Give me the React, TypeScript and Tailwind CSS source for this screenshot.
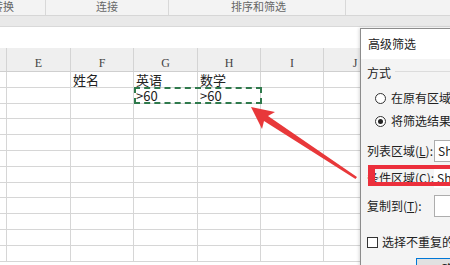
import React from 'react';

const CJK = "font-['Noto_Sans_CJK_SC','Noto_Sans',sans-serif]";
const SERIF = "font-['Liberation_Serif',serif]";

const columns = ['', 'E', 'F', 'G', 'H', 'I', 'J', 'K'];

// cell contents by row index -> column letter
const cells: Record<number, Record<string, string>> = {
  0: { F: '姓名', G: '英语', H: '数学' },
  1: { G: '>60', H: '>60' },
};

const gridCols = 'grid grid-cols-[7px_64px_63px_64px_63px_63px_63px_63px]';

const Ribbon: React.FC = () => (
  <div className={`flex h-[15px] bg-[#f3f3f3] text-[11px] leading-[13px] text-[#666] ${CJK}`}>
    <div className="w-[55px] border-r border-[#d8d8d8] pl-[1px] overflow-hidden whitespace-nowrap -ml-[9px]">
      <span>转换</span>
    </div>
    <div className="w-[123px] border-r border-[#d8d8d8] text-center">连接</div>
    <div className="w-[177px] border-r border-[#d8d8d8] pl-[62px]">排序和筛选</div>
    <div className="flex-1" />
  </div>
);

const SheetGrid: React.FC = () => (
  <div className="relative">
    {/* column headers */}
    <div className={`${gridCols} h-[24px] bg-[#efefef] border-b border-[#cfcfcf]`}>
      {columns.map((c, i) => (
        <div
          key={i}
          className={`border-r border-[#d4d4d4] flex items-end justify-center pb-[1px] text-[12px] leading-[14px] text-[#444] ${SERIF}`}
        >
          {c}
        </div>
      ))}
    </div>
    {/* rows */}
    {Array.from({ length: 12 }).map((_, r) => (
      <div key={r} className={`${gridCols} h-[15.8px]`}>
        {columns.map((c, i) => (
          <div
            key={i}
            className={`border-r border-b border-[#d6d6d6] pl-[2px] text-[13px] leading-[15px] text-[#222] whitespace-nowrap overflow-visible ${CJK}`}
          >
            {cells[r]?.[c] ?? ''}
          </div>
        ))}
      </div>
    ))}
    {/* copy marquee around G2:H2 */}
    <div className="absolute left-[134px] top-[39px] w-[128px] h-[17px] border-2 border-dashed border-[#2f7a4c]" />
  </div>
);

const Arrow: React.FC = () => (
  <svg className="absolute left-0 top-0" width="450" height="265" viewBox="0 0 450 265">
    <polygon
      points="251,107 275,112 268,116 357,177 355.5,179 264,121 262,129"
      fill="#e8383a"
    />
  </svg>
);

const Dialog: React.FC = () => (
  <div className={`absolute left-[360px] top-[28px] w-[210px] h-[250px] bg-[#f4f4f4] border-l border-t border-[#8c8c8c] shadow-[-1px_0_3px_rgba(0,0,0,0.15)] text-[12px] text-[#222] ${CJK}`}>
    <div className="h-[30px] bg-white flex items-center pl-[7px] text-[12px]">高级筛选</div>
    <div className="relative pl-[6px]">
      {/* 方式 group */}
      <div className="flex items-center h-[28px] gap-[4px]">
        <span>方式</span>
        <div className="flex-1 border-t border-[#dcdcdc] mt-[-4px]" />
      </div>
      <div className="flex items-center h-[22px] pl-[8px] gap-[5px] whitespace-nowrap">
        <span className="w-[11px] h-[11px] rounded-full border border-[#333] bg-white" />
        <span>在原有区域显示筛选结果</span>
      </div>
      <div className="flex items-center h-[24px] pl-[8px] gap-[5px] whitespace-nowrap">
        <span className="w-[11px] h-[11px] rounded-full border border-[#333] bg-white flex items-center justify-center">
          <span className="w-[5px] h-[5px] rounded-full bg-[#222]" />
        </span>
        <span>将筛选结果复制到其他位置</span>
      </div>
      {/* range fields */}
      <div className="flex items-center h-[23px] mt-[6px] whitespace-nowrap">
        <span className="w-[67px]">列表区域(<u>L</u>):</span>
        <div className="flex-1 h-[22px] border border-[#adadad] bg-white pl-[3px] leading-[20px]">Sheet1!$F$1</div>
      </div>
      <div className="relative flex items-center h-[23px] mt-[4px] whitespace-nowrap">
        <span className="w-[67px]">条件区域(<u>C</u>):</span>
        <div className="flex-1 h-[20px] bg-white pl-[3px] leading-[20px]">Sheet1!$G$1</div>
        <div className="absolute left-[1px] -top-[1px] right-0 h-[21px] border-[4px] border-l-[7px] border-[#ec2f3c]" />
      </div>
      <div className="flex items-center h-[23px] mt-[5px] whitespace-nowrap">
        <span className="w-[67px]">复制到(<u>T</u>):</span>
        <div className="flex-1 h-[22px] border border-[#adadad] bg-white" />
      </div>
      <div className="flex items-center h-[20px] mt-[15px] gap-[4px] whitespace-nowrap">
        <span className="w-[11px] h-[11px] border border-[#333] bg-white" />
        <span>选择不重复的记录(R)</span>
      </div>
      <div className="ml-[49px] mt-[6px] w-[76px] h-[22px] border border-[#0078d7] bg-[#e1e1e1] flex items-center justify-center">
        确定
      </div>
    </div>
  </div>
);

export default function App() {
  return (
    <div className="relative w-[450px] h-[265px] overflow-hidden bg-white">
      <Ribbon />
      <div className="h-[11px] bg-[#e9e9e9] border-t border-[#d6d6d6]" />
      <div className="h-[22px] bg-white border-t border-[#d9d9d9]" />
      <SheetGrid />
      <Arrow />
      <Dialog />
    </div>
  );
}
